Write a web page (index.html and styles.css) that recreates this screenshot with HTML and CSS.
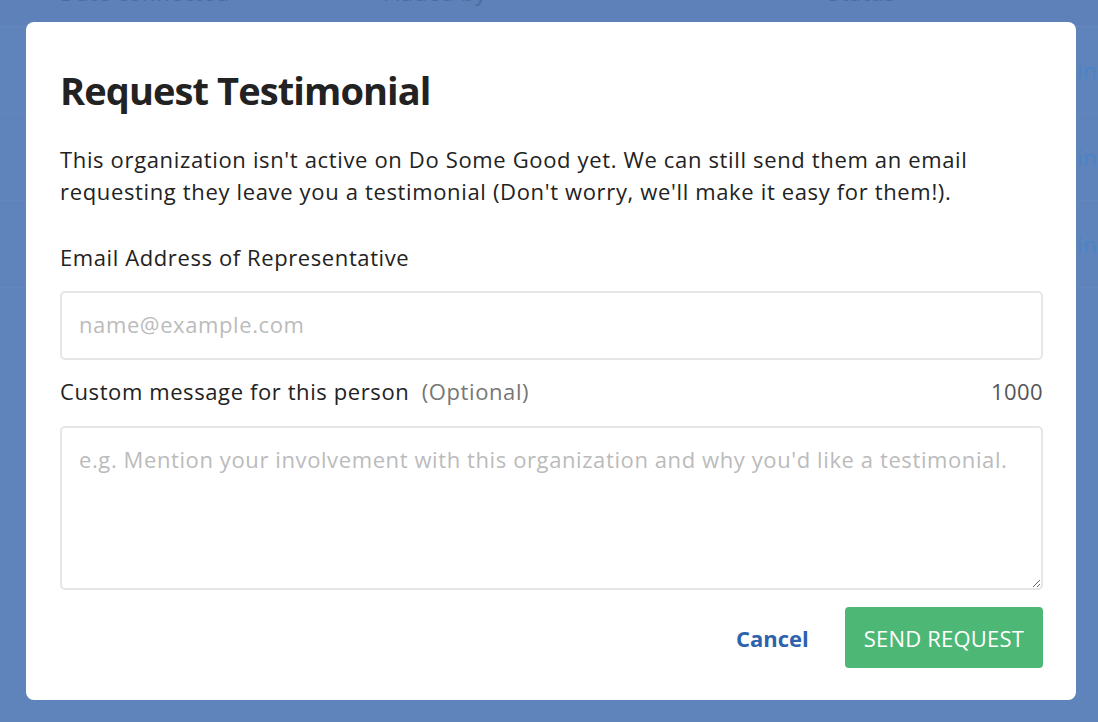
FILE: index.html
```html
<!DOCTYPE html>
<html lang="en">
<head>
<meta charset="utf-8">
<title>Request Testimonial</title>
<link rel="stylesheet" href="styles.css">
</head>
<body>
<div class="page">
  <div class="table">
    <div class="thead">
      <span class="th th-date">Date connected</span>
      <span class="th th-added">Added by</span>
      <span class="th th-status">Status</span>
    </div>
    <div class="row"><span class="cell-link">Remind</span></div>
    <div class="row"><span class="cell-link">Remind</span></div>
    <div class="row"><span class="cell-link">Remind</span></div>
  </div>
</div>

<div class="modal">
  <h1 class="title">Request Testimonial</h1>
  <p class="intro">This organization isn't active on Do Some Good yet. We can still send them an email requesting they leave you a testimonial (Don't worry, we'll make it easy for them!).</p>

  <label class="label" for="email">Email Address of Representative</label>
  <input class="field" id="email" type="email" placeholder="name@example.com">

  <div class="label-row">
    <label class="label" for="msg">Custom message for this person <span class="optional">(Optional)</span></label>
    <span class="counter">1000</span>
  </div>
  <textarea class="field area" id="msg" placeholder="e.g. Mention your involvement with this organization and why you'd like a testimonial."></textarea>

  <div class="actions">
    <button class="btn-cancel" type="button">Cancel</button>
    <button class="btn-send" type="button">SEND REQUEST</button>
  </div>
</div>
</body>
</html>
```

FILE: styles.css
```css
* { box-sizing: border-box; }

html, body {
  margin: 0;
  padding: 0;
  height: 100%;
  overflow: hidden;
}

body {
  background: #5f84bb;
  font-family: "Open Sans", "Noto Sans", sans-serif;
  color: #222;
}

.page {
  width: 100%;
}

.table {
  margin-top: -19px;
}

.thead {
  height: 46px;
  display: flex;
  align-items: flex-start;
  border-bottom: 1px solid #6587bd;
  background: #5d81b8;
  color: #4b6c9c;
  font-size: 22px;
  line-height: 22px;
  letter-spacing: 0.6px;
  white-space: nowrap;
}

.th-date { margin-left: 60px; width: 325px; }
.th-added { width: 443px; }

.row {
  height: 87px;
  border-bottom: 1px solid #6587bd;
  display: flex;
  align-items: center;
}

.cell-link {
  margin-left: 1029px;
  color: #4a83c6;
  font-size: 22px;
  letter-spacing: 0.6px;
  white-space: nowrap;
}

.modal {
  position: absolute;
  left: 26px;
  top: 22px;
  width: 1050px;
  height: 678px;
  background: #fff;
  border-radius: 8px;
  padding: 0 33px 0 34px;
  display: flex;
  flex-direction: column;
}

.title {
  margin: 45px 0 0;
  font-size: 38px;
  line-height: 46px;
  font-weight: 700;
  color: #222;
  letter-spacing: -0.9px;
}

.intro {
  margin: 30px 0 0;
  font-size: 22px;
  line-height: 32px;
  letter-spacing: 0.65px;
  color: #222;
}

.label {
  display: block;
  font-size: 22px;
  line-height: 28px;
  letter-spacing: 0.6px;
  color: #222;
}

.intro + .label {
  margin-top: 36px;
}

.optional {
  color: #777;
  margin-left: 6px;
}

.field {
  display: block;
  width: 100%;
  border: 2px solid #e6e6e6;
  border-radius: 5px;
  font-family: inherit;
  font-size: 22px;
  letter-spacing: 0.6px;
  color: #222;
  outline: none;
  background: #fff;
}

.field::placeholder {
  color: #bbbbbb;
}

input.field {
  margin-top: 20px;
  height: 69px;
  padding: 0 17px 4px;
}

.label-row {
  display: flex;
  justify-content: space-between;
  align-items: baseline;
  margin-top: 17px;
}

.counter {
  font-size: 22px;
  line-height: 28px;
  letter-spacing: 0.4px;
  color: #555;
}

.area {
  margin-top: 21px;
  height: 164px;
  padding: 17px 17px;
  line-height: 28px;
  resize: vertical;
}

.actions {
  display: flex;
  justify-content: flex-end;
  align-items: center;
  margin-top: 17px;
  gap: 36px;
}

.btn-cancel {
  background: none;
  border: none;
  padding: 0;
  font-family: inherit;
  font-size: 22px;
  font-weight: 700;
  color: #2f62ad;
  cursor: pointer;
}

.btn-send {
  height: 61px;
  padding: 0 19px;
  border: none;
  border-radius: 4px;
  background: #4db776;
  color: #fff;
  font-family: inherit;
  font-size: 22px;
  letter-spacing: 0.2px;
  cursor: pointer;
}
```
